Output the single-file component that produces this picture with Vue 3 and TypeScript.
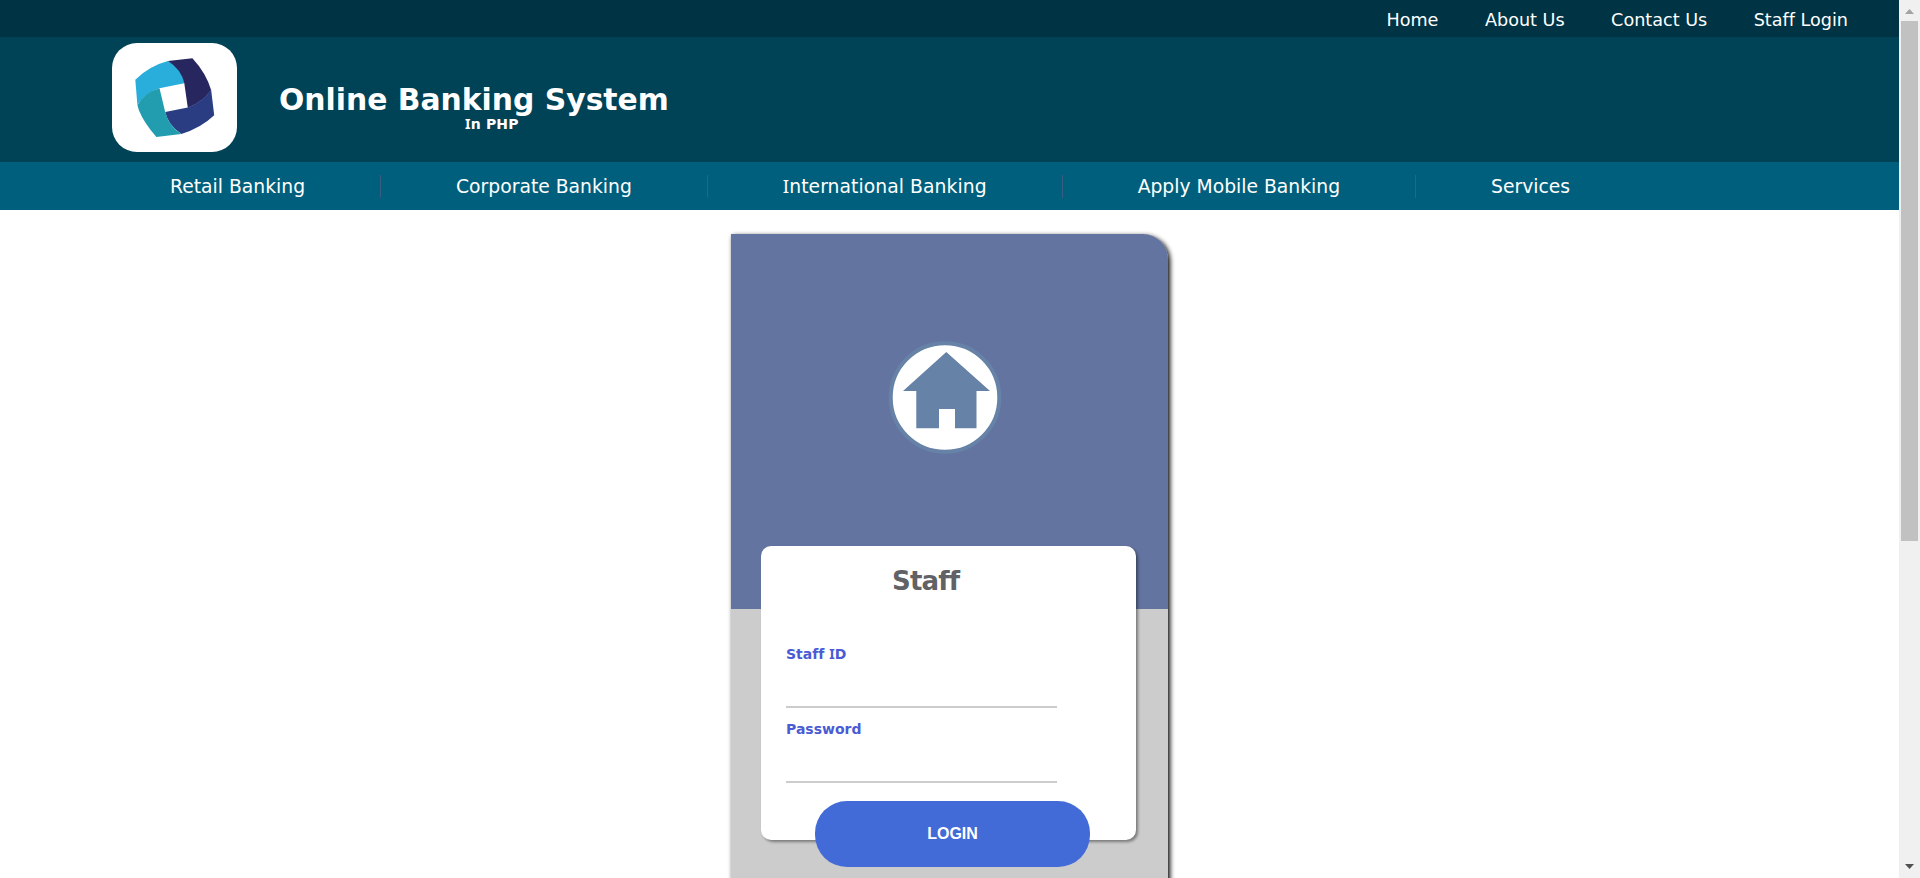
<script setup lang="ts">
interface NavItem {
  label: string
  key: string
}

const topLinks: NavItem[] = [
  { label: 'Home', key: 'home' },
  { label: 'About Us', key: 'about' },
  { label: 'Contact Us', key: 'contact' },
  { label: 'Staff Login', key: 'staff-login' },
]

const services: NavItem[] = [
  { label: 'Retail Banking', key: 'retail' },
  { label: 'Corporate Banking', key: 'corporate' },
  { label: 'International Banking', key: 'international' },
  { label: 'Apply Mobile Banking', key: 'mobile' },
  { label: 'Services', key: 'other' },
]
</script>

<template>
  <div class="screen">
    <div class="page">
      <nav class="topbar">
        <a v-for="link in topLinks" :key="link.key" :class="['top-link', link.key]">{{ link.label }}</a>
      </nav>

      <header class="header">
        <div class="logo">
          <svg width="125" height="109" viewBox="0 0 125 109">
            <path fill="#29aedb" d="M23.3 36.7Q37 23 55.9 18Q70 25 72.3 40.3L47.5 45.3Q35 49 26.4 60.3L25.4 62Z" />
            <path fill="#28265f" d="M55.9 18L80.4 15.3Q94 30 99.1 47Q91 59 75.8 64.7L72.3 40.3Q69 26 55.9 18Z" />
            <path fill="#2a3d82" d="M99.1 46.6L102.2 72.3Q89 85 69.3 91Q56 82 53.2 69L75.8 64.4Q91 59 99.1 46.6Z" />
            <path fill="#229db0" d="M47.5 45.3L53.2 69Q57 83 69.3 91L44.4 94Q32 80 26.8 67L25.4 62Q33 49 47.5 45.3Z" />
          </svg>
        </div>
        <div class="brand">
          <h1 class="brand-name">Online Banking System</h1>
          <span class="brand-sub">In PHP</span>
        </div>
      </header>

      <nav class="services">
        <a v-for="item in services" :key="item.key" :class="['service', item.key]">{{ item.label }}</a>
      </nav>

      <main class="card">
        <div class="hero">
          <svg class="home-icon" width="114" height="114" viewBox="0 0 114 114">
            <circle cx="57" cy="57.5" r="54.3" fill="#fff" stroke="#6782a7" stroke-width="4" />
            <path fill="#6782a7" d="M58.3 12L102 51H88.5V88.3H67V69H51V88.3H28.3V51H15Z" />
          </svg>
        </div>
        <form class="form" @submit.prevent>
          <h2 class="form-title">Staff</h2>
          <label class="field">
            <span class="staff-label">Staff <span class="barred">I</span>D</span>
            <input type="text" />
          </label>
          <label class="field">
            <span class="password-label">Password</span>
            <input type="password" />
          </label>
          <button class="login" type="submit">LOGIN</button>
        </form>
      </main>
    </div>

    <aside class="scrollbar">
      <svg width="21" height="21" viewBox="0 0 21 21"><path fill="#a3a3a3" d="M6 14L10.5 9L15 14Z" /></svg>
      <div class="thumb"></div>
      <svg class="down" width="21" height="21" viewBox="0 0 21 21"><path fill="#505050" d="M6 7H15L10.5 12Z" /></svg>
    </aside>
  </div>
</template>

<style>
body {
  margin: 0;
  overflow: hidden;
}
</style>

<style scoped>
.screen {
  display: flex;
  width: 1920px;
  height: 878px;
  overflow: hidden;
  background: #fff;
  font-family: "DejaVu Sans", sans-serif;
  font-variant-ligatures: none;
}
.page {
  width: 1899px;
  height: 878px;
  overflow: hidden;
}
.topbar {
  display: flex;
  justify-content: flex-end;
  gap: 46.5px;
  box-sizing: border-box;
  height: 37px;
  padding-right: 51px;
  background: #003344;
  color: #fff;
  font-size: 17.6px;
  line-height: 40px;
  white-space: nowrap;
}
.header {
  display: flex;
  box-sizing: border-box;
  height: 125px;
  padding: 6px 0 0 112px;
  background: #004256;
}
.logo {
  width: 125px;
  height: 109px;
  border-radius: 25px;
  background: #fff;
}
.logo svg {
  display: block;
}
.brand {
  margin-left: 42px;
  padding-top: 37px;
  color: #fff;
  white-space: nowrap;
}
.brand-name {
  margin: 0;
  font-size: 29.8px;
  font-weight: 700;
  line-height: 40px;
}
.brand-sub {
  display: block;
  margin: -6px 0 0 186px;
  font-size: 14px;
  font-weight: 700;
  line-height: 20px;
  letter-spacing: 0.2px;
}
.brand-sub::first-letter,
.international::first-letter,
.barred {
  font-family: "Noto Sans", sans-serif;
  line-height: 1;
}
.services {
  display: flex;
  align-items: center;
  box-sizing: border-box;
  height: 48px;
  padding-left: 95px;
  background: #005f7d;
}
.service {
  box-sizing: border-box;
  height: 23px;
  padding: 0 75px;
  border-right: 1px solid #395d81;
  color: #fff;
  font-size: 18.75px;
  line-height: 23px;
  white-space: nowrap;
}
.international {
  letter-spacing: 0.06px;
}
.service:last-child {
  border-right: 0;
}
.card {
  box-sizing: border-box;
  width: 437px;
  height: 700px;
  margin: 24px 0 0 731px;
  border-top-right-radius: 25px;
  background: #ccc;
  box-shadow: 2px 2px 5px 0 #000;
}
.hero {
  display: flex;
  justify-content: center;
  box-sizing: border-box;
  height: 375px;
  padding: 106px 9px 0 0;
  border-top-right-radius: 25px;
  background: #6474a0;
}
.form {
  display: flex;
  flex-direction: column;
  box-sizing: border-box;
  width: 375px;
  height: 294px;
  margin: -63px 0 0 30px;
  padding: 15px 25px 0;
  border-radius: 10px;
  background: #fff;
  box-shadow: 2px 2px 3px rgba(0, 0, 0, 0.4);
}
.form-title {
  margin: 0 0 44px 106px;
  color: #606266;
  font-size: 26px;
  line-height: 40px;
  letter-spacing: -0.8px;
}
.field {
  display: flex;
  flex-direction: column;
  height: 75px;
  flex: none;
  color: #4a5bd4;
  font-size: 14px;
  font-weight: 700;
  line-height: 19px;
}
.field input {
  box-sizing: border-box;
  width: 271px;
  height: 44px;
  padding: 0;
  border: 0;
  border-bottom: 2px solid #ccc;
  outline: 0;
  background: transparent;
}
.login {
  flex: none;
  width: 275px;
  height: 66px;
  margin: 6px 0 0 29px;
  padding: 0;
  border: 0;
  border-radius: 32px;
  background: #426bd7;
  color: #fff;
  font: bold 16px "Liberation Sans", Arial, sans-serif;
}
.scrollbar {
  display: flex;
  flex-direction: column;
  align-items: center;
  width: 21px;
  height: 878px;
  background: #f0f0f0;
}
.scrollbar svg {
  flex: none;
}
.thumb {
  width: 17px;
  height: 520px;
  background: #c1c1c1;
}
.down {
  margin-top: auto;
}
</style>
